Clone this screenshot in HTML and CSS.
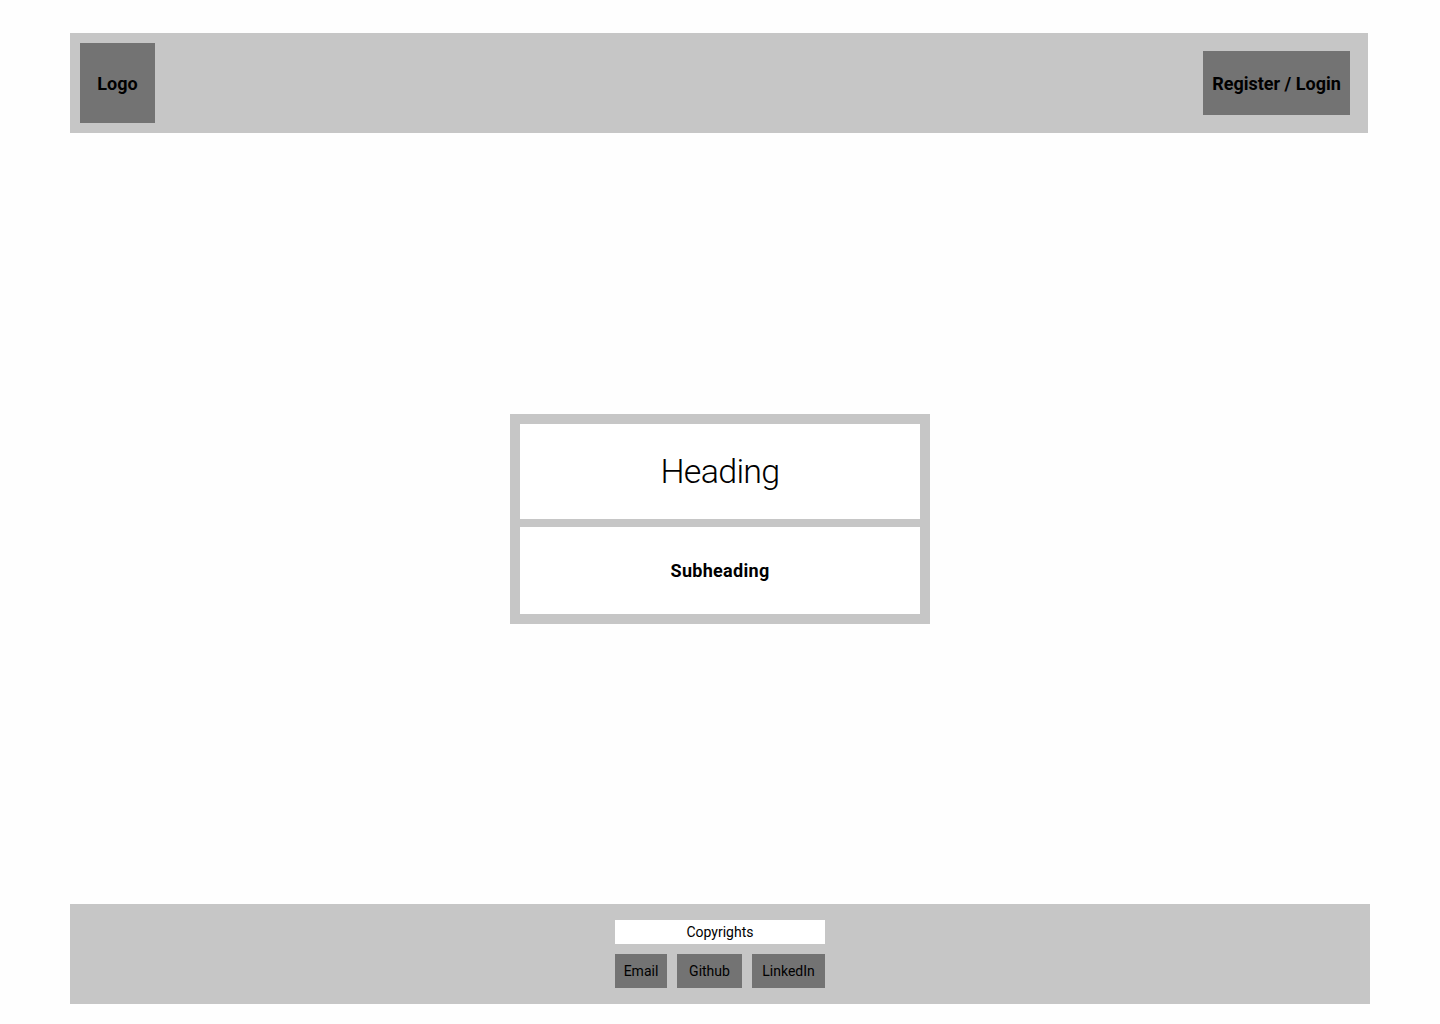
FILE: index.html
```html
<!DOCTYPE html>
<html lang="en">
<head>
<meta charset="utf-8">
<title>Landing</title>
<link rel="stylesheet" href="styles.css">
</head>
<body>
<div class="page">
  <header class="header">
    <div class="logo">Logo</div>
    <a class="auth-btn" href="#">Register / Login</a>
  </header>
  <main class="main">
    <section class="hero">
      <div class="hero-box hero-heading"><h1>Heading</h1></div>
      <div class="hero-box hero-sub"><h2>Subheading</h2></div>
    </section>
  </main>
  <footer class="footer">
    <div class="footer-inner">
      <div class="copyright">Copyrights</div>
      <nav class="links">
        <a class="link link-email" href="#">Email</a>
        <a class="link link-github" href="#">Github</a>
        <a class="link link-linkedin" href="#">LinkedIn</a>
      </nav>
    </div>
  </footer>
</div>
</body>
</html>
```
FILE: styles.css
```css
* { box-sizing: border-box; }
html, body {
  margin: 0;
  padding: 0;
  background: #fefefe;
  font-family: Roboto, "Liberation Sans", sans-serif;
  color: #000;
}
.page {
  min-height: 1024px;
  height: 100vh;
  display: flex;
  flex-direction: column;
  padding: 33px 70px 20px 70px;
}
.header {
  width: 1298px;
  height: 100px;
  flex: 0 0 auto;
  background: #c6c6c6;
  display: flex;
  align-items: center;
  justify-content: space-between;
  padding: 0 18px 0 10px;
}
.logo {
  width: 75px;
  height: 80px;
  background: #737373;
  display: flex;
  align-items: center;
  justify-content: center;
  font-weight: 700;
  font-size: 18px;
}
.auth-btn {
  width: 147px;
  height: 64px;
  background: #737373;
  display: flex;
  align-items: center;
  justify-content: center;
  font-weight: 700;
  font-size: 18px;
  color: #000;
  text-decoration: none;
  white-space: nowrap;
}
.main {
  flex: 1 1 auto;
  display: flex;
  align-items: center;
  justify-content: center;
}
.hero {
  width: 420px;
  background: #c6c6c6;
  padding: 10px;
  display: flex;
  flex-direction: column;
  gap: 8px;
}
.hero-box {
  background: #fff;
  display: flex;
  align-items: center;
  justify-content: center;
}
.hero-heading { height: 95px; }
.hero-sub { height: 87px; }
.hero-heading h1 {
  margin: 0;
  font-weight: 300;
  font-size: 34px;
  letter-spacing: -0.7px;
}
.hero-sub h2 {
  margin: 0;
  font-weight: 700;
  font-size: 18px;
  letter-spacing: 0.3px;
}
.footer {
  width: 1300px;
  height: 100px;
  flex: 0 0 auto;
  background: #c6c6c6;
  display: flex;
  justify-content: center;
  padding-top: 16px;
}
.footer-inner {
  width: 210px;
  display: flex;
  flex-direction: column;
  gap: 10px;
}
.copyright {
  height: 24px;
  background: #fff;
  display: flex;
  align-items: center;
  justify-content: center;
  font-size: 14px;
}
.links {
  display: flex;
  gap: 10px;
}
.link {
  height: 34px;
  background: #737373;
  color: #000;
  text-decoration: none;
  font-size: 14px;
  display: flex;
  align-items: center;
  justify-content: center;
}
.link-email { width: 52px; }
.link-github { width: 65px; }
.link-linkedin { width: 73px; }
```
